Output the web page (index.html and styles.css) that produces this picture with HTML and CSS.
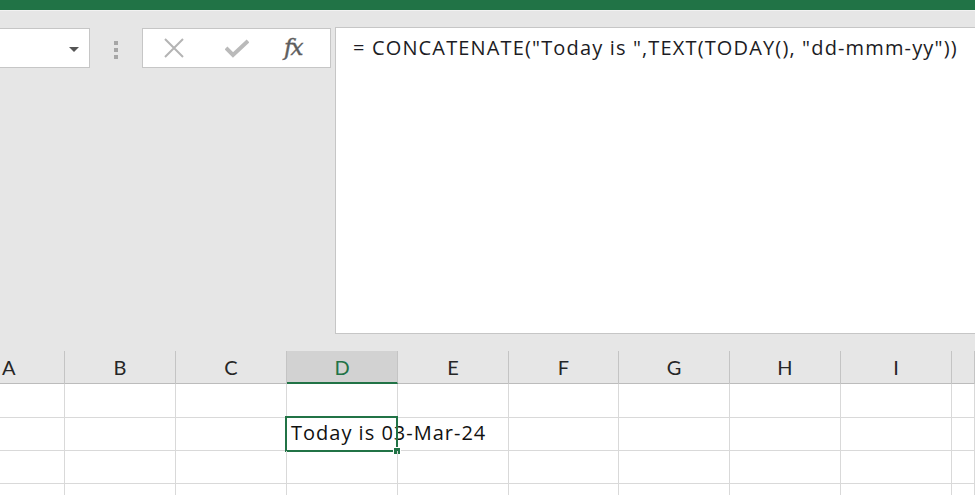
FILE: index.html
```html
<!DOCTYPE html>
<html lang="en">
<head>
    <meta charset="UTF-8">
    <title>Excel - CONCATENATE</title>
    <link rel="stylesheet" href="styles.css">
</head>
<body>

    <!-- Barra verde superior -->
    <div class="title-bar"></div>

    <!-- Cuadro de nombre y barra de fórmulas -->
    <div class="formula-area">
        <div class="name-box">
            <span class="arrow"></span>
        </div>
        <div class="grip">
            <span></span><span></span><span></span>
        </div>
        <div class="fx-buttons">
            <svg class="icon" width="22" height="20" viewBox="0 0 22 20">
                <path d="M2 1 L20 19 M20 1 L2 19" stroke="#b4b4b4" stroke-width="2" fill="none"/>
            </svg>
            <svg class="icon" width="24" height="20" viewBox="0 0 24 20">
                <path d="M1 10 L8 17 L23 3" stroke="#bababa" stroke-width="4" fill="none"/>
            </svg>
            <span class="fx">fx</span>
        </div>
        <div class="formula-bar">= CONCATENATE("Today is ",TEXT(TODAY(), "dd-mmm-yy"))</div>
    </div>

    <!-- Hoja -->
    <div class="sheet">
        <div class="grid header">
            <div class="col-head first">A</div>
            <div class="col-head">B</div>
            <div class="col-head">C</div>
            <div class="col-head active">D</div>
            <div class="col-head">E</div>
            <div class="col-head">F</div>
            <div class="col-head">G</div>
            <div class="col-head">H</div>
            <div class="col-head">I</div>
            <div class="col-head"></div>
        </div>
        <div class="grid row">
            <div class="cell"></div><div class="cell"></div><div class="cell"></div><div class="cell"></div><div class="cell"></div>
            <div class="cell"></div><div class="cell"></div><div class="cell"></div><div class="cell"></div><div class="cell"></div>
        </div>
        <div class="grid row">
            <div class="cell"></div><div class="cell"></div><div class="cell"></div>
            <div class="cell selected"><span class="value">Today is 03-Mar-24</span><span class="sel-border"></span><span class="handle"></span></div>
            <div class="cell"></div>
            <div class="cell"></div><div class="cell"></div><div class="cell"></div><div class="cell"></div><div class="cell"></div>
        </div>
        <div class="grid row">
            <div class="cell"></div><div class="cell"></div><div class="cell"></div><div class="cell"></div><div class="cell"></div>
            <div class="cell"></div><div class="cell"></div><div class="cell"></div><div class="cell"></div><div class="cell"></div>
        </div>
        <div class="grid row">
            <div class="cell"></div><div class="cell"></div><div class="cell"></div><div class="cell"></div><div class="cell"></div>
            <div class="cell"></div><div class="cell"></div><div class="cell"></div><div class="cell"></div><div class="cell"></div>
        </div>
    </div>

</body>
</html>
```

FILE: styles.css
```css
body {
    margin: 0;
    background-color: #e6e6e6;
    font-family: Lato, "Open Sans", sans-serif;
    overflow: hidden;
    width: 975px;
    height: 495px;
}

.title-bar {
    height: 10px;
    background-color: #217346;
    border-bottom: 1px solid #f2f2f2;
}

.formula-area {
    display: flex;
    align-items: flex-start;
    padding-top: 16px;
    height: 324px;
}

.name-box {
    width: 89px;
    height: 38px;
    margin-top: 1px;
    background-color: #fff;
    border: 1px solid #c6c6c6;
    border-left: none;
    position: relative;
}

.name-box .arrow {
    position: absolute;
    left: 69px;
    top: 18px;
    border-left: 5px solid transparent;
    border-right: 5px solid transparent;
    border-top: 5px solid #555;
}

.grip {
    display: flex;
    flex-direction: column;
    gap: 3px;
    margin: 14px 0 0 24px;
}

.grip span {
    width: 4px;
    height: 4px;
    background-color: #a6a6a6;
}

.fx-buttons {
    width: 187px;
    height: 38px;
    margin: 1px 0 0 24px;
    background-color: #fff;
    border: 1px solid #c6c6c6;
    display: flex;
    align-items: center;
}

.fx-buttons .icon:first-child {
    margin-left: 20px;
}

.fx-buttons .icon + .icon {
    margin-left: 40px;
}

.fx {
    margin-left: 35px;
    margin-top: -2px;
    font-family: "DejaVu Serif", serif;
    font-style: italic;
    font-size: 23px;
    color: #5e5e5e;
    letter-spacing: -2px;
    -webkit-text-stroke: 0.4px #5e5e5e;
}

.formula-bar {
    flex: 1;
    height: 307px;
    margin-left: 4px;
    background-color: #fff;
    border: 1px solid #c6c6c6;
    border-right: none;
    padding: 6px 0 0 17px;
    box-sizing: border-box;
    font-family: "Open Sans", sans-serif;
    font-size: 20px;
    letter-spacing: 1.15px;
    color: #1c1c24;
}

.sheet {
    background-color: #fff;
}

.grid {
    display: grid;
    grid-template-columns: 65px repeat(4, 111px) 110px repeat(3, 111px) 1fr;
}

.header {
    height: 32px;
    background-color: #e6e6e6;
    border-bottom: 1px solid #bcbcbc;
}

.col-head {
    border-right: 1px solid #c4c4c4;
    text-align: center;
    font-size: 20px;
    line-height: 32px;
    color: #262626;
}

.col-head.first {
    text-align: left;
    padding-left: 2px;
}

.col-head.active {
    background-color: #d2d2d2;
    color: #217346;
    border-bottom: 2px solid #217346;
    height: 31px;
}

.row {
    height: 32px;
    border-bottom: 1px solid #d9d9d9;
}

.header + .row {
    height: 33px;
}

.cell {
    border-right: 1px solid #d9d9d9;
    position: relative;
}

.cell .value {
    position: absolute;
    left: 4px;
    top: 1px;
    white-space: nowrap;
    font-family: "Open Sans", sans-serif;
    font-size: 20px;
    letter-spacing: 1px;
    color: #111;
}

.sel-border {
    position: absolute;
    left: -2px;
    top: -2px;
    width: 109px;
    height: 32px;
    border: 2px solid #217346;
}

.handle {
    position: absolute;
    right: -4px;
    bottom: -5px;
    width: 6px;
    height: 6px;
    background-color: #217346;
    border: 1px solid #fff;
}
```
